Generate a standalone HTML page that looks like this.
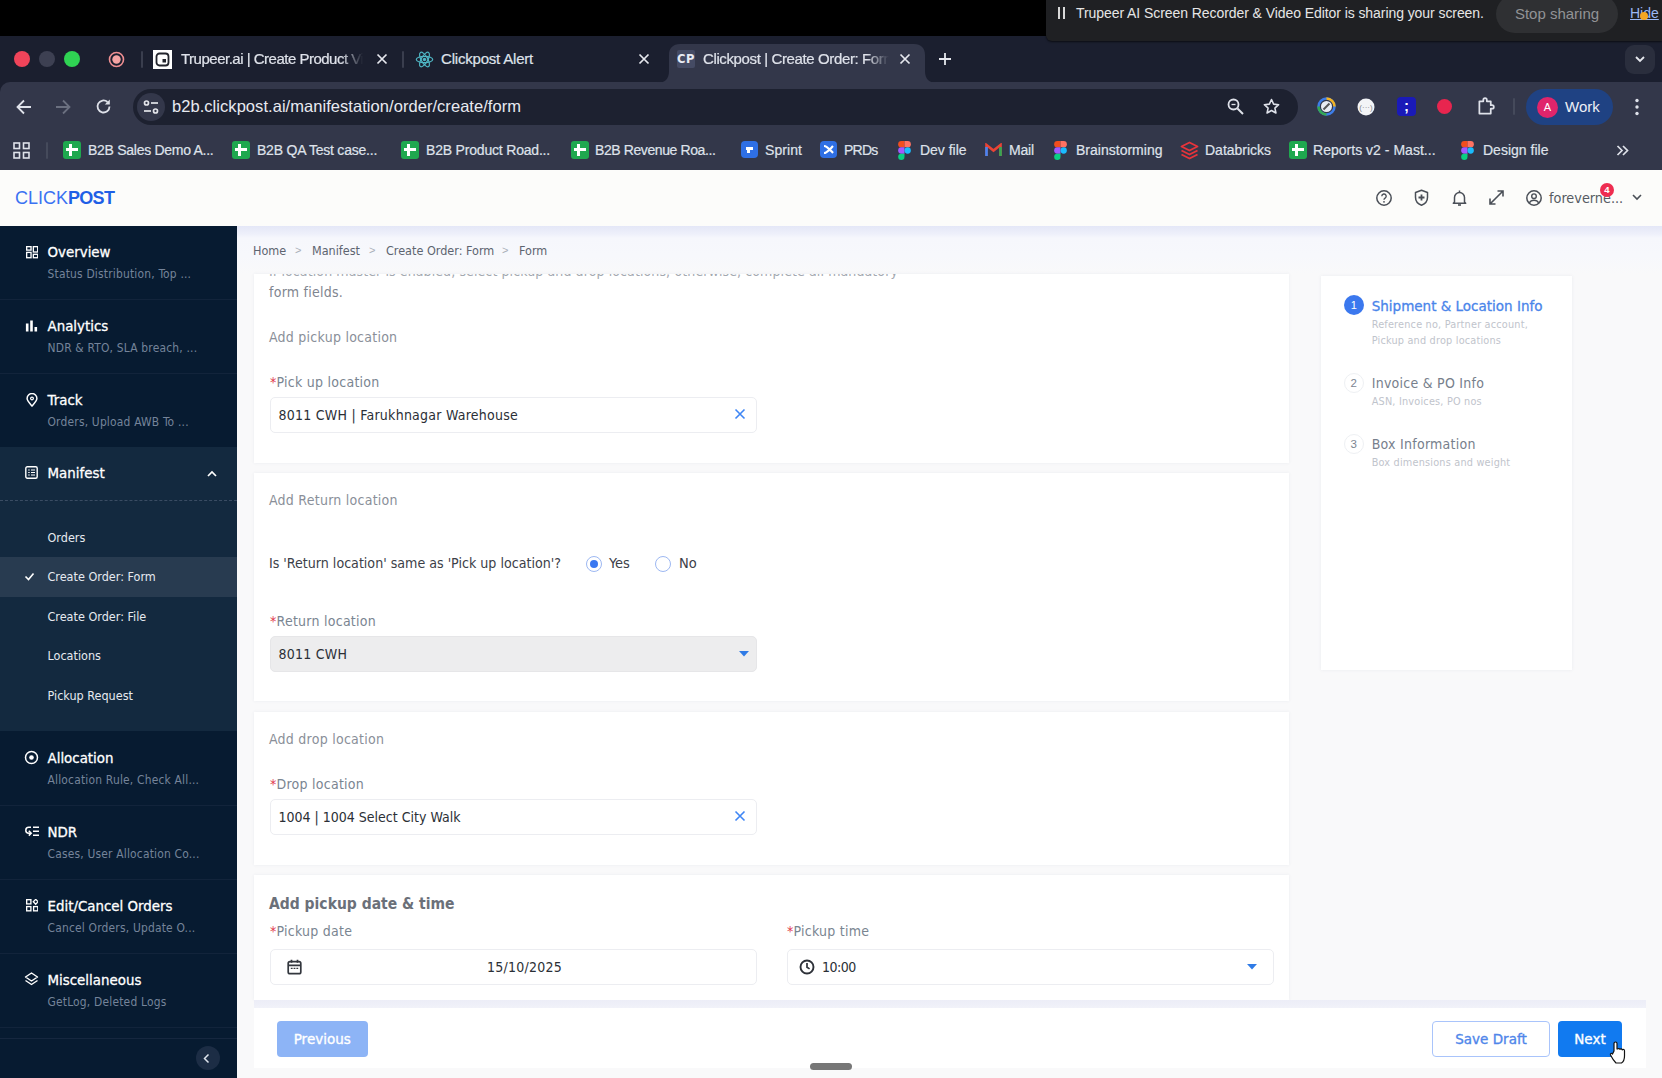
<!DOCTYPE html>
<html><head><meta charset="utf-8"><title>Clickpost | Create Order: Form</title>
<style>
*{box-sizing:border-box;margin:0;padding:0}
html,body{width:1662px;height:1078px;overflow:hidden;background:#f9f9fa;font-family:"DejaVu Sans Condensed","DejaVu Sans","Liberation Sans",sans-serif;}
body{position:relative}
.abs{position:absolute}
.chrome{font-family:"Liberation Sans",sans-serif;color:#e3e5ea}
#topblack{left:0;top:0;width:1662px;height:36px;background:#000}
#share{left:1046px;top:0;width:616px;height:41px;border-bottom-left-radius:6px;background:#1f2023;color:#e8e8e8;font-size:15px;box-shadow:0 1px 2px rgba(0,0,0,.6)}
#tabstrip{left:0;top:36px;width:1662px;height:60px;background:#1b1f2f}
#toolbar{left:0;top:82px;width:1662px;height:48px;background:#33374a;border-top-left-radius:10px}
#bmbar{left:0;top:130px;width:1662px;height:40px;background:#33374a}
#urlpill{left:133px;top:89px;width:1165px;height:36px;border-radius:18px;background:#1d2130}
.tabtxt{font-size:15px;letter-spacing:-.2px;-webkit-text-stroke:.2px #dfe2ea;top:50px;color:#dfe2ea;white-space:nowrap;overflow:hidden;height:20px;line-height:18px}
.bm{top:141px;font-size:14px;letter-spacing:-.27px;-webkit-text-stroke:.2px #dfe2ea;color:#dfe2ea;white-space:nowrap;line-height:18px}
.sheet{top:141px;width:18px;height:18px;border-radius:3px;background:#1fa84f}
.sheet:before{content:"";position:absolute;left:6px;top:3px;width:3px;height:12px;background:#fff}
.sheet:after{content:"";position:absolute;left:3px;top:7px;width:12px;height:2.500px;background:#fff}
/* app */
#header{left:0;top:170px;width:1662px;height:56px;background:#fcfcfa}
#hshadow{left:237px;top:226px;width:1425px;height:48px;background:linear-gradient(#e4e7f7 0,#eef0fa 8px,#f6f7fc 12px,#f7f8fc 30px,#f9f9fa 48px)}
#sidebar{left:0;top:226px;width:237px;height:852px;background:#071b31;color:#fff}
.nav{left:0;width:237px;height:74px;border-bottom:1px solid #12243b}
.nav .t{position:absolute;left:47.500px;top:17.300px;font-family:"DejaVu Sans","Liberation Sans",sans-serif;font-size:13.4px;-webkit-text-stroke:.3px #fff;color:#fff;white-space:nowrap;line-height:20px}
.nav .s{position:absolute;left:47.500px;top:40px;font-size:11.9px;letter-spacing:.2px;color:#75849a;white-space:nowrap;line-height:16px}
.sub{left:47.500px;margin-top:1px;font-size:12.5px;color:#e6eaf0;white-space:nowrap;line-height:16px}
.card{background:#fff;left:254px;width:1035px;box-shadow:0 0 3px rgba(120,130,160,.11)}
.lbl{margin-top:.6px;font-size:14px;letter-spacing:.25px;color:#7a8591;white-space:nowrap;line-height:18px}
.lbl b{color:#e0364c;font-weight:normal}
.sec{margin-top:.6px;font-size:14px;letter-spacing:.25px;color:#8a8f99;white-space:nowrap;line-height:18px}
.inp{height:36px;border:1px solid #ecedf1;border-radius:5px;background:#fff;font-size:14px;letter-spacing:.25px;color:#2b2f36;line-height:34px;white-space:nowrap}
.bc{margin-top:1px;font:12.500px/16px "DejaVu Sans Condensed","Liberation Sans",sans-serif;color:#5d6470;white-space:nowrap}
.bcs{font:11px/16px "Liberation Sans",sans-serif;color:#a9aeb8}
.stsub{letter-spacing:.2px;font:10.800px/14px "DejaVu Sans Condensed","Liberation Sans",sans-serif;color:#bfc4cc;white-space:nowrap}
.stt{letter-spacing:.25px;font:14px/18px "DejaVu Sans Condensed","Liberation Sans",sans-serif;color:#77808c;white-space:nowrap}
.stn{width:20px;height:20px;border-radius:50%;border:1px solid #eef0f3;color:#7c8591;font:11.500px/18px "Liberation Sans",sans-serif;text-align:center;background:#fff}
</style></head><body>
<!-- ===== browser chrome ===== -->
<div id="topblack" class="abs"></div>
<div id="tabstrip" class="abs chrome"></div>
<div id="toolbar" class="abs chrome"></div>
<div id="bmbar" class="abs chrome"></div>
<div id="urlpill" class="abs"></div>
<!-- traffic lights -->
<div class="abs" style="left:14px;top:51px;width:16px;height:16px;border-radius:50%;background:#f0445a"></div>
<div class="abs" style="left:39px;top:51px;width:16px;height:16px;border-radius:50%;background:#3d4052"></div>
<div class="abs" style="left:64px;top:51px;width:16px;height:16px;border-radius:50%;background:#2fd353"></div>
<svg class="abs" style="left:108px;top:51px" width="17" height="17" viewBox="0 0 17 17"><circle cx="8.5" cy="8.5" r="7" fill="none" stroke="#f08f92" stroke-width="1.6"/><circle cx="8.5" cy="8.5" r="4.2" fill="#f5a3a3"/></svg>
<div class="abs" style="left:141px;top:51px;width:2px;height:17px;background:#3a3e4e;border-radius:1px"></div>
<!-- tab 1 -->
<svg class="abs" style="left:153px;top:50px" width="19" height="19" viewBox="0 0 19 19"><rect width="19" height="19" fill="#fff"/><rect x="3.5" y="3.5" width="12" height="12" rx="3" fill="#fff" stroke="#22242c" stroke-width="1.8"/><rect x="9.5" y="9" width="3.5" height="3.5" fill="#22242c"/></svg>
<div class="abs tabtxt chrome" style="left:181px;width:182px;letter-spacing:-.5px;-webkit-mask-image:linear-gradient(90deg,#000 88%,transparent)">Trupeer.ai | Create Product Video</div>
<svg class="abs" style="left:376px;top:53px" width="12" height="12" viewBox="0 0 12 12"><path d="M1.5 1.5l9 9M10.500 1.5l-9 9" stroke="#e6e8ee" stroke-width="1.7" fill="none"/></svg>
<div class="abs" style="left:402px;top:51px;width:2px;height:17px;background:#3a3e4e;border-radius:1px"></div>
<!-- tab 2 -->
<svg class="abs" style="left:415px;top:50px" width="19" height="19" viewBox="-9.5 -9.500 19 19"><g fill="none" stroke="#4fb6c4" stroke-width="1.2"><ellipse rx="8.200" ry="3.2"/><ellipse rx="8.200" ry="3.2" transform="rotate(60)"/><ellipse rx="8.200" ry="3.2" transform="rotate(120)"/></g><circle r="1.700" fill="#4fb6c4"/></svg>
<div class="abs tabtxt chrome" style="left:441px;width:160px">Clickpost Alert</div>
<svg class="abs" style="left:638px;top:53px" width="12" height="12" viewBox="0 0 12 12"><path d="M1.5 1.5l9 9M10.500 1.5l-9 9" stroke="#e6e8ee" stroke-width="1.700" fill="none"/></svg>
<!-- active tab -->
<svg class="abs" style="left:656.500px;top:44px" width="280" height="39" viewBox="0 0 280 39"><path d="M0 39 C8 39 12 35 12 27 V11 C12 4 16 0 23 0 H257 C264 0 268 4 268 11 V27 C268 35 272 39 280 39 Z" fill="#33374a"/></svg>
<div class="abs" style="left:677px;top:50px;width:18px;height:18px;background:#454b64;border-radius:2px;color:#e8ebf4;font:bold 11.500px/18px 'DejaVu Sans',sans-serif;text-align:center;letter-spacing:.5px">CP</div>
<div class="abs tabtxt chrome" style="left:703px;width:186px;letter-spacing:-.38px;-webkit-mask-image:linear-gradient(90deg,#000 88%,transparent)">Clickpost | Create Order: Form</div>
<svg class="abs" style="left:899px;top:53px" width="12" height="12" viewBox="0 0 12 12"><path d="M1.5 1.5l9 9M10.500 1.5l-9 9" stroke="#e6e8ee" stroke-width="1.700" fill="none"/></svg>
<svg class="abs" style="left:938px;top:52px" width="14" height="14" viewBox="0 0 14 14"><path d="M7 1v12M1 7h12" stroke="#e6e8ee" stroke-width="1.800" fill="none"/></svg>
<div class="abs" style="left:1625px;top:45px;width:30px;height:29px;border-radius:9px;background:#2a2e3d"></div>
<svg class="abs" style="left:1634px;top:55px" width="12" height="9" viewBox="0 0 12 9"><path d="M2 2l4 4 4-4" stroke="#e6e8ee" stroke-width="1.800" fill="none"/></svg>
<!-- toolbar icons -->
<svg class="abs" style="left:15px;top:98px" width="18" height="18" viewBox="0 0 18 18"><path d="M16 9H3M9 2.500L2.500 9 9 15.500" stroke="#dfe2ea" stroke-width="1.800" fill="none"/></svg>
<svg class="abs" style="left:54px;top:98px" width="18" height="18" viewBox="0 0 18 18"><path d="M2 9H15M9 2.500L15.500 9 9 15.500" stroke="#6b7080" stroke-width="1.800" fill="none"/></svg>
<svg class="abs" style="left:94px;top:97px" width="19" height="19" viewBox="0 0 19 19"><path d="M15.500 9.500a6 6 0 1 1-2-4.500" stroke="#dfe2ea" stroke-width="1.800" fill="none"/><path d="M15.800 2.500v5h-5z" fill="#dfe2ea"/></svg>
<div class="abs" style="left:137px;top:93px;width:28px;height:28px;border-radius:50%;background:#33374a"></div>
<svg class="abs" style="left:142px;top:99px" width="18" height="16" viewBox="0 0 18 16"><g stroke="#e3e5ea" stroke-width="1.700" fill="none"><circle cx="4.500" cy="4" r="2"/><path d="M9 4h7"/><circle cx="13.500" cy="12" r="2"/><path d="M2 12h7"/></g></svg>
<div class="abs chrome" style="left:172px;top:96px;font-size:16.500px;letter-spacing:.05px;line-height:20px;color:#e8eaf0;white-space:nowrap" id="urltxt">b2b.clickpost.ai/manifestation/order/create/form</div>
<svg class="abs" style="left:1226px;top:97px" width="19" height="19" viewBox="0 0 19 19"><circle cx="7.500" cy="7.500" r="5" stroke="#dfe2ea" stroke-width="1.800" fill="none"/><path d="M11.500 11.500l5.500 5.500" stroke="#dfe2ea" stroke-width="1.900"/><path d="M5.500 7.500h4" stroke="#dfe2ea" stroke-width="1.300"/></svg>
<svg class="abs" style="left:1262px;top:97px" width="19" height="19" viewBox="0 0 24 24"><path d="M12 3.200l2.700 5.800 6.300.7-4.700 4.300 1.300 6.200L12 17l-5.600 3.200 1.300-6.200L3 9.700l6.300-.7z" stroke="#dfe2ea" stroke-width="2" fill="none" stroke-linejoin="round"/></svg>
<!-- extensions -->
<svg class="abs" style="left:1317px;top:97px" width="19" height="19" viewBox="0 0 19 19"><circle cx="9.500" cy="9.500" r="8" fill="none" stroke="#3d7de8" stroke-width="2.500"/><path d="M9.500 1.500a8 8 0 0 1 8 8" stroke="#f3b323" stroke-width="2.500" fill="none"/><path d="M1.500 9.500a8 8 0 0 0 8 8" stroke="#35a853" stroke-width="2.500" fill="none"/><circle cx="9.500" cy="9.500" r="5.500" fill="#e9ecf2"/><path d="M6.500 12.500l6-6" stroke="#555" stroke-width="2"/></svg>
<svg class="abs" style="left:1357px;top:98px" width="18" height="18" viewBox="0 0 18 18"><circle cx="9" cy="9" r="8.500" fill="#f3f4f7"/><text x="9" y="12" font-size="8" text-anchor="middle" fill="#888" font-family="Liberation Sans, sans-serif">(···)</text></svg>
<div class="abs" style="left:1397px;top:97px;width:19px;height:19px;border-radius:4px;background:#1a1ab8;color:#fff;font:bold 15px/17px 'Liberation Sans',sans-serif;text-align:center">;</div>
<div class="abs" style="left:1437px;top:99px;width:15px;height:15px;border-radius:50%;background:#e8254f"></div>
<svg class="abs" style="left:1475px;top:96px" width="21" height="21" viewBox="0 0 24 24"><path d="M9.500 4.500a2 2 0 0 1 4 0V6H18v4.500h1.500a2 2 0 0 1 0 4H18V20H5V6h4.500z" stroke="#dfe2ea" stroke-width="2" fill="none" stroke-linejoin="round"/></svg>
<div class="abs" style="left:1513px;top:98px;width:2px;height:17px;background:#454a5b;border-radius:1px"></div>
<div class="abs" style="left:1526px;top:89px;width:87px;height:36px;border-radius:18px;background:#1f4283"></div>
<div class="abs" style="left:1537px;top:97px;width:21px;height:21px;border-radius:50%;background:#e0256b;color:#fff;font:11px/21px 'Liberation Sans',sans-serif;text-align:center">A</div>
<div class="abs chrome" style="left:1565px;top:98px;font-size:15px;line-height:18px;color:#eef0f6">Work</div>
<svg class="abs" style="left:1635px;top:98px" width="4" height="18" viewBox="0 0 4 18"><circle cx="2" cy="2.500" r="1.700" fill="#dfe2ea"/><circle cx="2" cy="9" r="1.700" fill="#dfe2ea"/><circle cx="2" cy="15.500" r="1.700" fill="#dfe2ea"/></svg>
<!-- bookmarks -->
<svg class="abs" style="left:13px;top:142px" width="17" height="17" viewBox="0 0 17 17"><g fill="none" stroke="#dfe2ea" stroke-width="1.600"><rect x="1" y="1" width="5.500" height="5.500"/><rect x="10.500" y="1" width="5.500" height="5.500"/><rect x="1" y="10.500" width="5.500" height="5.500"/><rect x="10.500" y="10.500" width="5.500" height="5.500"/></g></svg>
<div class="abs" style="left:46px;top:142px;width:2px;height:17px;background:#454a5b;border-radius:1px"></div>
<div class="abs sheet" style="left:63px"></div><div class="abs bm chrome" style="left:88px;letter-spacing:-0.28px">B2B Sales Demo A...</div>
<div class="abs sheet" style="left:232px"></div><div class="abs bm chrome" style="left:257px;letter-spacing:-0.22px">B2B QA Test case...</div>
<div class="abs sheet" style="left:401px"></div><div class="abs bm chrome" style="left:426px;letter-spacing:-0.19px">B2B Product Road...</div>
<div class="abs sheet" style="left:571px"></div><div class="abs bm chrome" style="left:595px;letter-spacing:-0.40px">B2B Revenue Roa...</div>
<div class="abs" style="left:741px;top:141px;width:17px;height:17px;border-radius:4px;background:#2f6fe4"></div>
<svg class="abs" style="left:744px;top:144px" width="11" height="11" viewBox="0 0 11 11"><path d="M2 3h7v3H6v3H3V6H2z" fill="#fff"/></svg>
<div class="abs bm chrome" style="left:765px;letter-spacing:0.06px">Sprint</div>
<div class="abs" style="left:820px;top:141px;width:17px;height:17px;border-radius:4px;background:#2f6fe4"></div>
<svg class="abs" style="left:823px;top:144px" width="11" height="11" viewBox="0 0 11 11"><path d="M1 2c3 0 6 4 9 7M1 9c3 0 6-4 9-7" stroke="#fff" stroke-width="2.200" fill="none"/></svg>
<div class="abs bm chrome" style="left:844px;letter-spacing:-0.77px">PRDs</div>
<svg class="abs figma" style="left:898px;top:141px" width="13" height="19" viewBox="0 0 12 18"><path d="M3 0h3v6H3a3 3 0 0 1 0-6z" fill="#f24e1e"/><path d="M6 0h3a3 3 0 0 1 0 6H6z" fill="#ff7262"/><path d="M3 6h3v6H3a3 3 0 0 1 0-6z" fill="#a259ff"/><circle cx="9" cy="9" r="3" fill="#1abcfe"/><path d="M3 12h3v3a3 3 0 1 1-3-3z" fill="#0acf83"/></svg>
<div class="abs bm chrome" style="left:920px;letter-spacing:-0.02px">Dev file</div>
<svg class="abs" style="left:985px;top:143px" width="17" height="14" viewBox="0 0 17 14"><path d="M1.500 13V2l7 5.500 7-5.500v11" stroke="#ea4335" stroke-width="2.600" fill="none"/><path d="M1.500 13V4" stroke="#4285f4" stroke-width="2.600"/><path d="M15.500 13V4" stroke="#34a853" stroke-width="2.600"/></svg>
<div class="abs bm chrome" style="left:1009px;letter-spacing:-0.17px">Mail</div>
<svg class="abs figma" style="left:1054px;top:141px" width="13" height="19" viewBox="0 0 12 18"><path d="M3 0h3v6H3a3 3 0 0 1 0-6z" fill="#f24e1e"/><path d="M6 0h3a3 3 0 0 1 0 6H6z" fill="#ff7262"/><path d="M3 6h3v6H3a3 3 0 0 1 0-6z" fill="#a259ff"/><circle cx="9" cy="9" r="3" fill="#1abcfe"/><path d="M3 12h3v3a3 3 0 1 1-3-3z" fill="#0acf83"/></svg>
<div class="abs bm chrome" style="left:1076px;letter-spacing:0.01px">Brainstorming</div>
<svg class="abs" style="left:1180px;top:141px" width="19" height="19" viewBox="0 0 19 19"><g fill="none" stroke="#e8343a" stroke-width="1.800" stroke-linejoin="round"><path d="M1.500 5.500l8-4 8 4-8 4z"/><path d="M1.500 9.500l8 4 8-4"/><path d="M1.500 13.500l8 4 8-4"/></g></svg>
<div class="abs bm chrome" style="left:1205px;letter-spacing:-0.01px">Databricks</div>
<div class="abs sheet" style="left:1289px"></div><div class="abs bm chrome" style="left:1313px;letter-spacing:0.02px">Reports v2 - Mast...</div>
<svg class="abs figma" style="left:1461px;top:141px" width="13" height="19" viewBox="0 0 12 18"><path d="M3 0h3v6H3a3 3 0 0 1 0-6z" fill="#f24e1e"/><path d="M6 0h3a3 3 0 0 1 0 6H6z" fill="#ff7262"/><path d="M3 6h3v6H3a3 3 0 0 1 0-6z" fill="#a259ff"/><circle cx="9" cy="9" r="3" fill="#1abcfe"/><path d="M3 12h3v3a3 3 0 1 1-3-3z" fill="#0acf83"/></svg>
<div class="abs bm chrome" style="left:1483px;letter-spacing:0.01px">Design file</div>
<svg class="abs" style="left:1616px;top:145px" width="13" height="11" viewBox="0 0 13 11"><path d="M1.500 1l4.500 4.500L1.500 10M7 1l4.500 4.500L7 10" stroke="#dfe2ea" stroke-width="1.700" fill="none"/></svg>
<!-- share bar -->
<div id="share" class="abs chrome"></div>
<div class="abs" style="left:1058px;top:7px;width:2px;height:12px;background:#d8d8d8"></div>
<div class="abs" style="left:1063px;top:7px;width:2px;height:12px;background:#d8d8d8"></div>
<div class="abs chrome" style="left:1076px;top:4px;font-size:14px;letter-spacing:-.07px;line-height:18px;color:#e6e6e6;white-space:nowrap" id="sharetxt">Trupeer AI Screen Recorder &amp; Video Editor is sharing your screen.</div>
<div class="abs chrome" style="left:1496px;top:-5px;width:122px;height:38px;border-radius:19px;background:#2f3033;color:#929396;font-size:15px;line-height:38px;text-align:center">Stop sharing</div>
<div class="abs chrome" style="left:1630px;top:4px;font-size:14px;line-height:18px;color:#9cb8f5;text-decoration:underline;white-space:nowrap">Hide</div>
<div class="abs" style="left:1640px;top:12px;width:8px;height:8px;border-radius:50%;background:#f5a623"></div>
<!-- ===== app ===== -->
<div id="header" class="abs"></div>
<div class="abs" style="left:15px;top:186px;font:18px/24px 'Liberation Sans',sans-serif;color:#3a72f2;white-space:nowrap" id="logo">CLICK<b style="letter-spacing:-.7px;color:#1f5fe6">POST</b></div>
<!-- header icons -->
<svg class="abs" style="left:1375px;top:189px" width="18" height="18" viewBox="0 0 18 18"><circle cx="9" cy="9" r="7.200" fill="none" stroke="#4a4f57" stroke-width="1.500"/><path d="M6.800 7.200a2.200 2.200 0 1 1 3.300 1.900c-.7.400-1.100.8-1.100 1.600" fill="none" stroke="#4a4f57" stroke-width="1.400"/><circle cx="9" cy="12.800" r=".9" fill="#4a4f57"/></svg>
<svg class="abs" style="left:1413px;top:189px" width="17" height="18" viewBox="0 0 17 18"><path d="M8.500 1.200l6 2.300v4.800c0 3.700-2.500 6.700-6 8-3.500-1.300-6-4.300-6-8V3.500z" fill="none" stroke="#4a4f57" stroke-width="1.500" stroke-linejoin="round"/><path d="M8.500 5.500v6M5.500 8.500h6" stroke="#4a4f57" stroke-width="1.800"/></svg>
<svg class="abs" style="left:1451px;top:189px" width="17" height="18" viewBox="0 0 17 18"><path d="M3.500 13V8.500a5 5 0 0 1 10 0V13l1.200 1.200H2.300z" fill="none" stroke="#4a4f57" stroke-width="1.500" stroke-linejoin="round"/><path d="M8.500 1.500v2" stroke="#4a4f57" stroke-width="1.500"/><path d="M7 16h3" stroke="#4a4f57" stroke-width="1.600"/></svg>
<svg class="abs" style="left:1488px;top:189px" width="17" height="17" viewBox="0 0 17 17"><path d="M2 15L15 2M9.500 2H15v5.500M2 9.500V15h5.500" fill="none" stroke="#4a4f57" stroke-width="1.600"/></svg>
<svg class="abs" style="left:1525px;top:189px" width="18" height="18" viewBox="0 0 18 18"><circle cx="9" cy="9" r="7.200" fill="none" stroke="#4a4f57" stroke-width="1.500"/><circle cx="9" cy="7.200" r="2.300" fill="none" stroke="#4a4f57" stroke-width="1.400"/><path d="M4.300 13.800c1-1.800 2.700-2.600 4.700-2.600s3.700.8 4.700 2.600" fill="none" stroke="#4a4f57" stroke-width="1.400"/></svg>
<div class="abs" style="left:1549px;top:188px;font:14.300px/20px 'DejaVu Sans Condensed','Liberation Sans',sans-serif;color:#555b63;white-space:nowrap" id="uname">foreverne...</div>
<div class="abs" style="left:1600px;top:183px;width:14px;height:14px;border-radius:50%;background:#ee2d50;color:#fff;font:bold 9.500px/14px 'Liberation Sans',sans-serif;text-align:center">4</div>
<svg class="abs" style="left:1631px;top:193px" width="12" height="9" viewBox="0 0 12 9"><path d="M2 2l4 4 4-4" stroke="#4a4f57" stroke-width="1.600" fill="none"/></svg>
<!-- ===== sidebar ===== -->
<div id="sidebar" class="abs">
 <div class="abs nav" style="top:0"><div class="t">Overview</div><div class="s">Status Distribution, Top ...</div></div>
 <div class="abs nav" style="top:74px"><div class="t">Analytics</div><div class="s">NDR &amp; RTO, SLA breach, ...</div></div>
 <div class="abs nav" style="top:148px;border-bottom:none"><div class="t">Track</div><div class="s">Orders, Upload AWB To ...</div></div>
 <div class="abs" style="left:0;top:221px;width:237px;height:284px;background:#13293f"></div>
 <div class="abs" style="left:0;top:274px;width:237px;border-top:1px dashed #3a4c63"></div>
 <div class="abs nav" style="top:221px;border-bottom:none"><div class="t">Manifest</div></div>
 <svg class="abs" style="left:206px;top:243px" width="12" height="9" viewBox="0 0 12 9"><path d="M2 7l4-4 4 4" stroke="#fff" stroke-width="1.700" fill="none"/></svg>
 <div class="abs" style="left:0;top:331px;width:237px;height:40px;background:#283b50"></div>
 <div class="abs sub" style="top:303px">Orders</div>
 <svg class="abs" style="left:24px;top:346px" width="11" height="9" viewBox="0 0 11 9"><path d="M1.500 4.500l3 3 5-6" stroke="#fff" stroke-width="1.600" fill="none"/></svg>
 <div class="abs sub" style="top:342px">Create Order: Form</div>
 <div class="abs sub" style="top:382px">Create Order: File</div>
 <div class="abs sub" style="top:421px">Locations</div>
 <div class="abs sub" style="top:461px">Pickup Request</div>
 <div class="abs nav" style="top:506px"><div class="t">Allocation</div><div class="s">Allocation Rule, Check All...</div></div>
 <div class="abs nav" style="top:579.500px"><div class="t">NDR</div><div class="s">Cases, User Allocation Co...</div></div>
 <div class="abs nav" style="top:653.500px"><div class="t">Edit/Cancel Orders</div><div class="s">Cancel Orders, Update O...</div></div>
 <div class="abs nav" style="top:727.500px"><div class="t">Miscellaneous</div><div class="s">GetLog, Deleted Logs</div></div>
 <div class="abs" style="left:0;top:812px;width:237px;border-top:1px solid #16273f"></div>
 <div class="abs" style="left:196px;top:820px;width:24px;height:24px;border-radius:50%;background:#1c2d45"></div>
 <svg class="abs" style="left:202px;top:827px" width="9" height="11" viewBox="0 0 9 11"><path d="M6.500 1.500l-4 4 4 4" stroke="#dfe5ee" stroke-width="1.500" fill="none"/></svg>
 <!-- nav icons -->
 <svg class="abs" style="left:25.600px;top:20.200px" width="12.400" height="12.400" viewBox="0 0 13 13"><g fill="none" stroke="#fff" stroke-width="1.400"><rect x=".7" y=".7" width="4.600" height="3.600"/><rect x="7.700" y=".7" width="4.600" height="5.600"/><rect x=".7" y="6.700" width="4.600" height="5.600"/><rect x="7.700" y="8.700" width="4.600" height="3.600"/></g></svg>
 <svg class="abs" style="left:25px;top:93px" width="13" height="13" viewBox="0 0 13 13"><path d="M2.200 4.500v8M6.500 1.500v11M10.800 8v4.500" stroke="#fff" stroke-width="2.600"/></svg>
 <svg class="abs" style="left:26px;top:167px" width="12" height="14" viewBox="0 0 13 15"><path d="M6.500 14C3.500 10.500 1.200 8.300 1.200 5.800a5.300 5.300 0 0 1 10.600 0c0 2.500-2.300 4.700-5.300 8.200z" fill="none" stroke="#fff" stroke-width="1.600"/><circle cx="6.500" cy="5.800" r="1.500" fill="none" stroke="#fff" stroke-width="1.300"/></svg>
 <svg class="abs" style="left:25px;top:240px" width="13" height="13" viewBox="0 0 13 13"><rect x=".8" y=".8" width="11.400" height="11.400" rx="1.500" fill="none" stroke="#fff" stroke-width="1.400"/><path d="M3.200 4h1.500M6 4h4M3.200 6.500h1.500M6 6.500h4M3.200 9h1.500M6 9h4" stroke="#fff" stroke-width="1.200"/></svg>
 <svg class="abs" style="left:24px;top:524px" width="15" height="15" viewBox="0 0 15 15"><circle cx="7.500" cy="7.500" r="6" fill="none" stroke="#fff" stroke-width="1.500"/><circle cx="7.500" cy="7.500" r="2.300" fill="#fff"/></svg>
 <svg class="abs" style="left:25px;top:599px" width="14" height="13" viewBox="0 0 14 13"><path d="M8 2.200h6M8 6.200h6M8 10.200h6" stroke="#fff" stroke-width="1.600"/><path d="M6 2.200H3.800a3 3 0 0 0 0 6H5.500" fill="none" stroke="#fff" stroke-width="1.500"/><path d="M3.800 5.800l2.400 2.400-2.400 2.400" fill="none" stroke="#fff" stroke-width="1.500"/></svg>
 <svg class="abs" style="left:25.500px;top:673px" width="12.500" height="12.500" viewBox="0 0 13 13"><g fill="none" stroke="#fff" stroke-width="1.400"><rect x=".7" y=".7" width="4.400" height="4.400"/><rect x=".7" y="7.900" width="4.400" height="4.400"/><rect x="7.900" y="7.900" width="4.400" height="4.400"/><path d="M10.100 .4l2.500 2.500-2.500 2.500-2.500-2.500z"/></g></svg>
 <svg class="abs" style="left:24px;top:745.500px" width="15" height="14" viewBox="0 0 15 14"><g fill="none" stroke="#fff" stroke-width="1.400" stroke-linejoin="round"><path d="M7.500 1l6 4-6 4-6-4z"/><path d="M1.500 8.500l6 4 6-4"/></g></svg>
</div>
<div id="hshadow" class="abs"></div>
<!-- breadcrumb -->
<div class="abs bc" style="left:253px;top:242px">Home</div><div class="abs bcs" style="left:295px;top:242px">&gt;</div>
<div class="abs bc" style="left:312px;top:242px">Manifest</div><div class="abs bcs" style="left:369px;top:242px">&gt;</div>
<div class="abs bc" style="left:386px;top:242px">Create Order: Form</div><div class="abs bcs" style="left:502px;top:242px">&gt;</div>
<div class="abs bc" style="left:519px;top:242px">Form</div>
<!-- ===== cards ===== -->
<div class="abs card" style="top:273.500px;height:189.500px"></div>
<div class="abs" style="left:254px;top:273.500px;width:1035px;height:12px;overflow:hidden"><div class="abs sec" style="left:15px;top:-12.600px;color:#a3a8b0;letter-spacing:.1px">If location master is enabled, select pickup and drop locations; otherwise, complete all mandatory</div></div>
<div class="abs sec" style="left:269px;top:282px;color:#7f858f">form fields.</div>
<div class="abs sec" style="left:269px;top:327px">Add pickup location</div>
<div class="abs lbl" style="left:270px;top:372px"><b>*</b>Pick up location</div>
<div class="abs inp" style="left:270px;top:396.500px;width:487px;padding-left:7.500px">8011 CWH | Farukhnagar Warehouse</div>
<svg class="abs" style="left:734px;top:408px" width="12" height="12" viewBox="0 0 12 12"><path d="M1.500 1.500l9 9M10.500 1.500l-9 9" stroke="#3f86f5" stroke-width="1.600" fill="none"/></svg>

<div class="abs card" style="top:473px;height:228px"></div>
<div class="abs sec" style="left:269px;top:490px">Add Return location</div>
<div class="abs" style="left:269px;top:554px;font:14.100px/18px 'DejaVu Sans Condensed','Liberation Sans',sans-serif;color:#3c4048;white-space:nowrap" id="rq">Is 'Return location' same as 'Pick up location'?</div>
<div class="abs" style="left:586px;top:556px;width:16px;height:16px;border-radius:50%;border:1.500px solid #9db8f2;background:#fff"></div>
<div class="abs" style="left:590px;top:560px;width:8px;height:8px;border-radius:50%;background:#3a78f0"></div>
<div class="abs" style="left:609px;top:554px;font:14.500px/18px 'DejaVu Sans Condensed','Liberation Sans',sans-serif;color:#3c4048">Yes</div>
<div class="abs" style="left:655px;top:556px;width:16px;height:16px;border-radius:50%;border:1.500px solid #9db8f2;background:#fff"></div>
<div class="abs" style="left:679px;top:554px;font:14.500px/18px 'DejaVu Sans Condensed','Liberation Sans',sans-serif;color:#3c4048">No</div>
<div class="abs lbl" style="left:270px;top:611px"><b>*</b>Return location</div>
<div class="abs inp" style="left:270px;top:635.500px;width:487px;padding-left:7.500px;background:#ededee;border-color:#e6e6e8">8011 CWH</div>
<svg class="abs" style="left:739px;top:651px" width="10" height="6" viewBox="0 0 10 6"><path d="M0 0h10L5 5.500z" fill="#2f7be6"/></svg>

<div class="abs card" style="top:712px;height:153px"></div>
<div class="abs sec" style="left:269px;top:729px">Add drop location</div>
<div class="abs lbl" style="left:270px;top:774px"><b>*</b>Drop location</div>
<div class="abs inp" style="left:270px;top:798.700px;width:487px;padding-left:7.500px;letter-spacing:0">1004 | 1004 Select City Walk</div>
<svg class="abs" style="left:734px;top:810px" width="12" height="12" viewBox="0 0 12 12"><path d="M1.500 1.500l9 9M10.500 1.500l-9 9" stroke="#3f86f5" stroke-width="1.600" fill="none"/></svg>

<div class="abs card" style="top:875px;height:125px"></div>
<div class="abs" style="left:269px;top:894px;font:bold 15.500px/20px 'DejaVu Sans Condensed','Liberation Sans',sans-serif;color:#6b7079;white-space:nowrap" id="pdt">Add pickup date &amp; time</div>
<div class="abs lbl" style="left:270px;top:921px"><b>*</b>Pickup date</div>
<div class="abs lbl" style="left:787px;top:921px"><b>*</b>Pickup time</div>
<div class="abs inp" style="left:270px;top:949px;width:487px;text-align:center;padding-left:22px">15/10/2025</div>
<svg class="abs" style="left:287px;top:959px" width="15" height="16" viewBox="0 0 15 16"><rect x="1.200" y="2.700" width="12.600" height="12" rx="1.800" fill="none" stroke="#33373e" stroke-width="1.700"/><path d="M1.500 6.300h12M4.500 .8v3M10.500 .8v3" stroke="#33373e" stroke-width="1.700"/><path d="M3.800 9.300h1.800M6.600 9.300h1.800M9.400 9.300h1.800" stroke="#33373e" stroke-width="1.200"/></svg>
<div class="abs inp" style="left:787px;top:949px;width:487px;padding-left:34px;letter-spacing:-.5px">10:00</div>
<svg class="abs" style="left:799px;top:959px" width="16" height="16" viewBox="0 0 16 16"><circle cx="8" cy="8" r="6.500" fill="none" stroke="#2d3138" stroke-width="1.900"/><path d="M8 4v4.300l2.600 1.600" fill="none" stroke="#2d3138" stroke-width="1.700"/></svg>
<svg class="abs" style="left:1247px;top:964px" width="10" height="6" viewBox="0 0 10 6"><path d="M0 0h10L5 5.500z" fill="#2f7be6"/></svg>

<!-- ===== stepper ===== -->
<div class="abs" style="left:1321px;top:275.500px;width:250.500px;height:394px;background:#fff;box-shadow:0 0 3px rgba(120,130,160,.12)"></div>
<div class="abs" style="left:1343.800px;top:295.300px;width:20px;height:20px;border-radius:50%;background:#3b78ee;color:#fff;font:11px/20px 'Liberation Sans',sans-serif;text-align:center">1</div>
<div class="abs" style="left:1371.700px;top:297px;font:13.500px/18px 'DejaVu Sans','Liberation Sans',sans-serif;-webkit-text-stroke:.3px #4a85ea;color:#4a85ea;white-space:nowrap" id="st1">Shipment &amp; Location Info</div>
<div class="abs stsub" style="left:1371.700px;top:318px">Reference no, Partner account,</div>
<div class="abs stsub" style="left:1371.700px;top:334px">Pickup and drop locations</div>
<div class="abs stn" style="left:1343.800px;top:372.500px">2</div>
<div class="abs stt" style="left:1371.700px;top:374px">Invoice &amp; PO Info</div>
<div class="abs stsub" style="left:1371.700px;top:395px">ASN, Invoices, PO nos</div>
<div class="abs stn" style="left:1343.800px;top:433.500px">3</div>
<div class="abs stt" style="left:1371.700px;top:435px">Box Information</div>
<div class="abs stsub" style="left:1371.700px;top:456px">Box dimensions and weight</div>

<!-- ===== footer ===== -->
<div class="abs" style="left:254px;top:1000px;width:1392px;height:8px;background:linear-gradient(#ecedf7,#f1f2f9)"></div>
<div class="abs" style="left:254px;top:1008px;width:1392px;height:60px;background:#fff"></div>
<div class="abs" style="left:277px;top:1020.500px;width:90.500px;height:36px;border-radius:4px;background:#8db4f6;color:#fff;-webkit-text-stroke:.35px #fff;font:13.500px/36px 'DejaVu Sans','Liberation Sans',sans-serif;text-align:center">Previous</div>
<div class="abs" style="left:1432px;top:1020.500px;width:118px;height:36px;border-radius:4px;background:#fff;border:1px solid #a9c4fb;color:#4f86ea;-webkit-text-stroke:.35px #4f86ea;font:13.500px/34px 'DejaVu Sans','Liberation Sans',sans-serif;text-align:center">Save Draft</div>
<div class="abs" style="left:1558px;top:1020.500px;width:64px;height:36px;border-radius:4px;background:#117af0;color:#fff;-webkit-text-stroke:.35px #fff;font:13.500px/36px 'DejaVu Sans','Liberation Sans',sans-serif;text-align:center">Next</div>
<div class="abs" style="left:810px;top:1063px;width:42px;height:7px;border-radius:4px;background:#777"></div>
<!-- cursor -->
<svg class="abs" style="left:1608px;top:1040px" width="20" height="24" viewBox="0 0 20 24"><path d="M6 11V3.500a1.500 1.500 0 0 1 3 0V9l1-.2a1.300 1.300 0 0 1 2 .5 1.300 1.300 0 0 1 2.200.6 1.300 1.300 0 0 1 2.300 1V16c0 3-1.500 6-3 7H8c-2-2-4-5-5.500-8-.5-1.200 1-2.200 2-1z" fill="#fff" stroke="#111" stroke-width="1.200" stroke-linejoin="round"/></svg>
</body></html>
